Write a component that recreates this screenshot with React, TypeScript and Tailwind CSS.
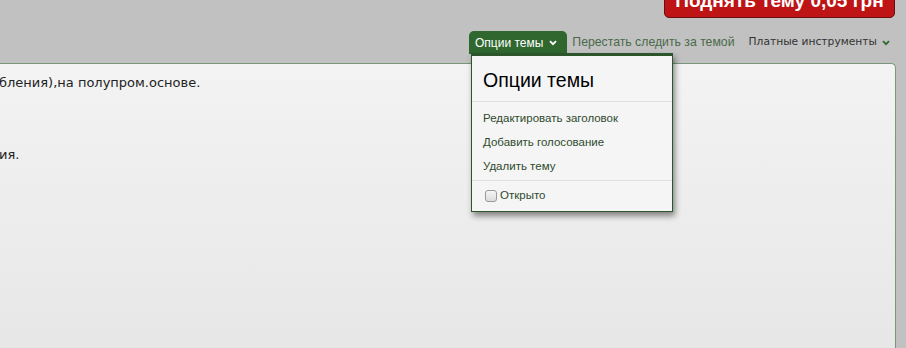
import React from "react";

function Chevron({ className }: { className?: string }) {
  return (
    <svg viewBox="0 0 8 6" className={className} width="8" height="6">
      <path d="M1 1.2 L4 4.2 L7 1.2" fill="none" stroke="currentColor" strokeWidth="1.8" />
    </svg>
  );
}

const lib = { fontFamily: '"Liberation Sans", Arial, sans-serif' };

export default function App() {
  return (
    <div
      className="relative w-[906px] h-[348px] overflow-hidden bg-[#c1c1c1] flex flex-col"
      style={{ fontFamily: '"DejaVu Sans", Verdana, sans-serif' }}
    >
      {/* top red button */}
      <div className="flex justify-end pr-[11px] shrink-0">
        <div
          className="-mt-[17px] w-[231px] h-[35px] bg-[#be1416] border border-[#6e0d0d] rounded-b-[5px] flex items-center justify-center text-white font-bold text-[19px] leading-none whitespace-nowrap"
          style={lib}
        >
          Поднять тему 0,05 грн
        </div>
      </div>

      {/* tabs row */}
      <div className="flex justify-end items-end pr-[16px] mt-[13px] h-[23px] shrink-0">
        <div
          className="h-[23px] pl-[6px] pr-[10px] bg-[#2f672f] text-white rounded-t-[5px] flex items-center gap-[6px] mr-[5px] text-[12px]"
          style={lib}
        >
          <span>Опции темы</span>
          <Chevron className="text-white" />
        </div>
        <div className="h-[23px] flex items-center text-[#4a6a4a] mr-[14px] text-[12.25px]" style={lib}>
          Перестать следить за темой
        </div>
        <div className="h-[23px] flex items-center gap-[5px] text-[#333] text-[10.7px]">
          <span>Платные инструменты</span>
          <Chevron className="text-[#2f672f]" />
        </div>
      </div>

      {/* main panel */}
      <div className="mt-[9px] -ml-[1px] mr-[10px] flex-1 border-t border-r border-[#7a977a] rounded-tr-[5px] bg-gradient-to-b from-[#f3f3f3] to-[#e7e7e7] pt-[7px] text-[13px] text-[#222] leading-[24px]">
        <div>бления),на полупром.основе.</div>
        <div className="h-[24px]" />
        <div className="h-[24px]" />
        <div>ия.</div>
      </div>

      {/* dropdown */}
      <div
        className="absolute left-[471px] top-[53px] w-[202px] bg-[#f5f5f5] border border-[#2c552c] border-t-[3px] shadow-[2px_4px_6px_rgba(0,0,0,0.45)] flex flex-col"
        style={lib}
      >
        <div className="px-[11px] pt-[12px] pb-[9px] text-[19.5px] leading-[24px] text-black border-b border-[#e0e0e0]">
          Опции темы
        </div>
        <div className="flex flex-col pt-[5px] pb-[1px] text-[11.5px] text-[#2e4a2e] border-b border-[#e0e0e0]">
          <div className="px-[11px] h-[24px] flex items-center">Редактировать заголовок</div>
          <div className="px-[11px] h-[24px] flex items-center">Добавить голосование</div>
          <div className="px-[11px] h-[24px] flex items-center">Удалить тему</div>
        </div>
        <div className="px-[13px] h-[30px] flex items-center gap-[3px] text-[11.5px] text-[#2e4a2e]">
          <span className="w-[12px] h-[12px] rounded-[3px] border border-[#9a9a9a] bg-gradient-to-b from-[#f6f6f6] to-[#dcdcdc]" />
          <span>Открыто</span>
        </div>
      </div>
    </div>
  );
}
